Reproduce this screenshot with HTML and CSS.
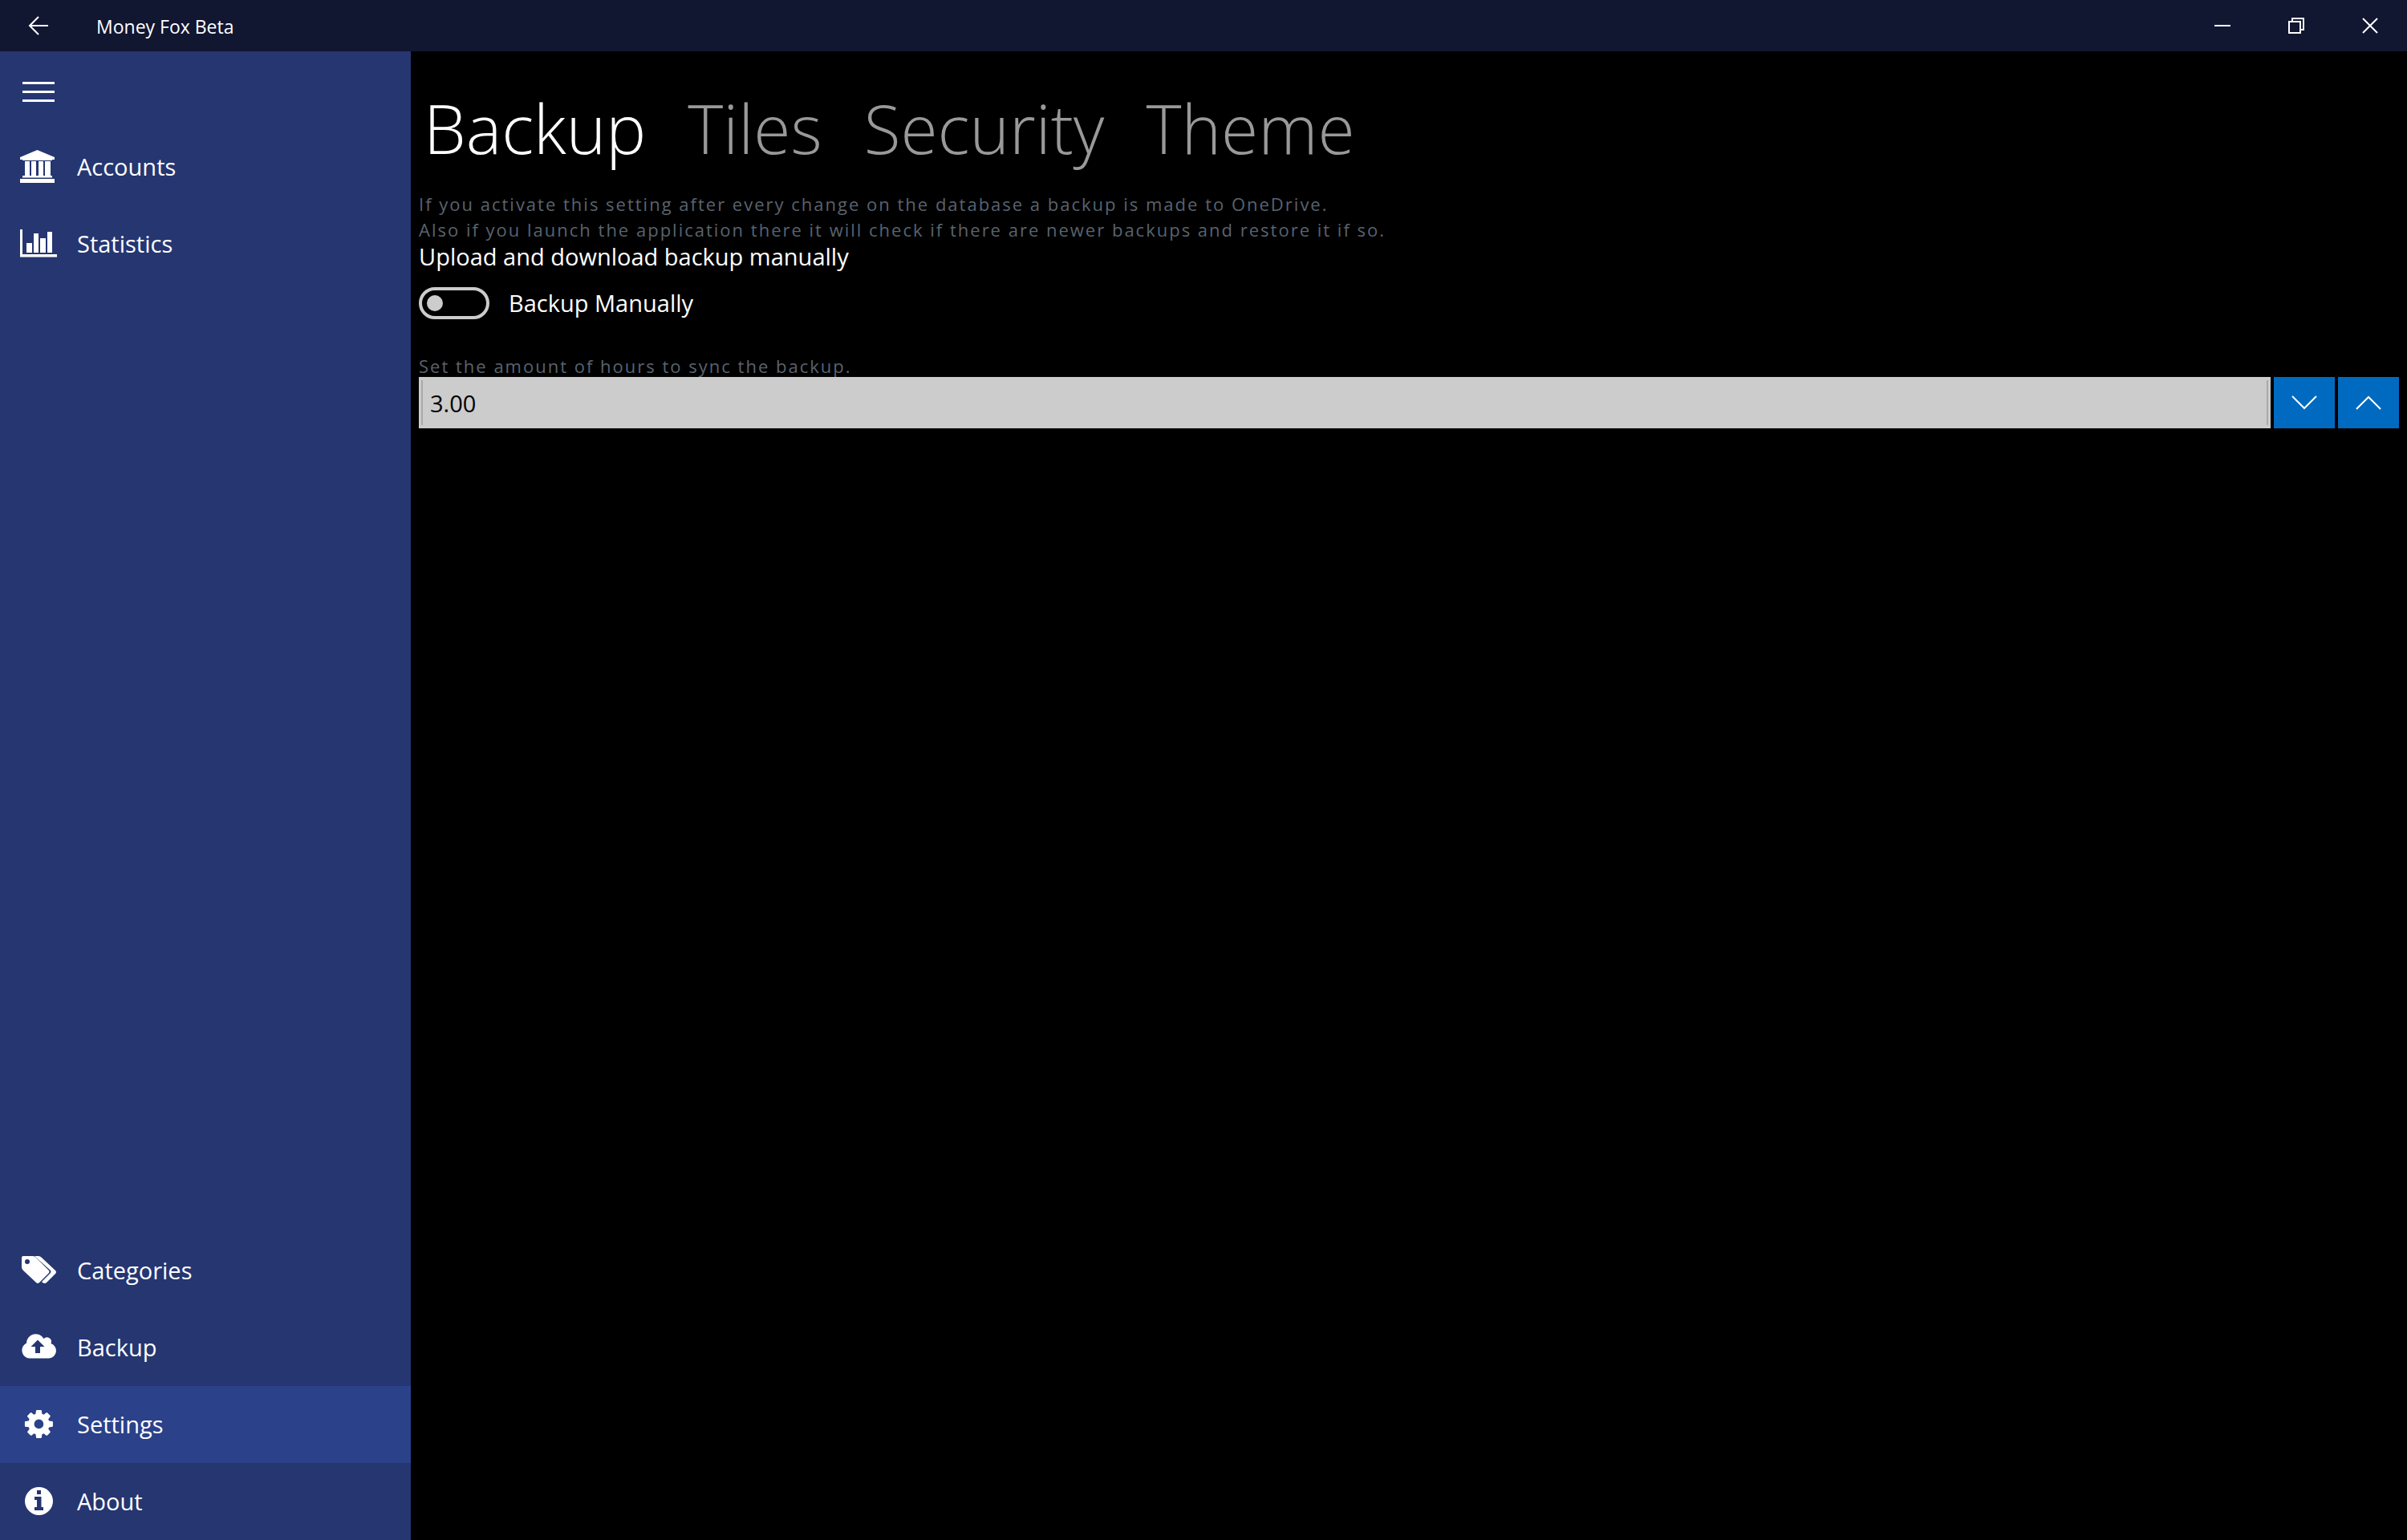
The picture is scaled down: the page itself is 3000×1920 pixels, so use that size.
FILE: index.html
```html
<!DOCTYPE html>
<html lang="en">
<head>
<meta charset="utf-8">
<title>Money Fox Beta</title>
<link rel="stylesheet" href="styles.css">
</head>
<body>
<header class="titlebar">
  <button class="back" aria-label="Back"><svg width="26" height="24" viewBox="0 0 26 24"><path d="M25 12H2M13 1L2 12l11 11" /></svg></button>
  <h1 class="app-name">Money Fox Beta</h1>
  <div class="window-buttons">
    <button aria-label="Minimize"><svg width="20" height="20" viewBox="0 0 20 20"><path d="M0 10h20"/></svg></button>
    <button aria-label="Restore"><svg width="20" height="20" viewBox="0 0 20 20"><path d="M1 5h14v14H1zM5 5V1h14v14h-4"/></svg></button>
    <button aria-label="Close"><svg width="20" height="20" viewBox="0 0 20 20"><path d="M1 1l18 18M19 1L1 19"/></svg></button>
  </div>
</header>
<div class="shell">
  <nav class="sidebar">
    <button class="menu" aria-label="Menu"><svg width="40" height="26" viewBox="0 0 40 26"><path d="M0 0h40v3H0zM0 11h40v3H0zM0 22h40v3H0z"/></svg></button>
    <a class="item" href="#accounts"><svg viewBox="0 0 48 48"><path d="M22.500 3L44 12v3h-3v1H4v-1H1v-3zM7 17h6v18h2V17h6v18h3V17h6v18h2V17h7v18h2v2.500H4V35h3zM1 39h43v5H1z"/></svg>Accounts</a>
    <a class="item" href="#statistics"><svg viewBox="0 0 48 48"><path d="M1 6h3v31h43v3.500H1zM9 23h7v12H9zM18 11h6v24h-6zM26 17h7v18h-7zM35 9h6v26h-6z"/></svg>Statistics</a>
    <div class="spacer"></div>
    <a class="item" href="#categories"><svg viewBox="0 0 48 48"><path fill-rule="evenodd" d="M5 6h12q2 0 4 2l15.500 15.500q2 2 0 4L25 39q-2 2-4 0L5 24q-2-2-2-4V8q0-2 2-2zM10 10a3 3 0 1 0 0 6 3 3 0 0 0 0-6z"/><path d="M19 6h5q2 0 4 2l17 16q2 2 0 4L34 39q-2 2-5 0l-1-1 10.500-10.500q2-2 0-4z"/></svg>Categories</a>
    <a class="item" href="#backup"><svg viewBox="0 0 48 48"><path fill-rule="evenodd" d="M13 37.500a10 10 0 0 1-4-19A11.500 11.500 0 0 1 30.500 13a5.500 5.500 0 0 1 9 6A9.500 9.500 0 0 1 37 37.500zM23 14.500L14.500 23H20v8h6v-8h5.500z"/></svg>Backup</a>
    <a class="item selected" href="#settings" aria-current="page"><svg viewBox="0 0 48 48"><path transform="translate(4 3) scale(.0228)" d="M1152 896q0-106-75-181t-181-75-181 75-75 181 75 181 181 75 181-75 75-181zm512-109v222q0 12-8 23t-20 13l-185 28q-19 54-39 91 35 50 107 138 10 12 10 25t-9 23q-27 37-99 108t-94 71q-12 0-26-9l-138-108q-44 23-91 38-16 136-29 186-7 28-36 28h-222q-14 0-24.500-8.500t-11.500-21.500l-28-184q-49-16-90-37l-141 107q-10 9-25 9-14 0-25-11-126-114-165-168-7-10-7-23 0-12 8-23 15-21 51-66.500t54-70.500q-27-50-41-99l-183-27q-13-2-21-12.500t-8-23.500v-222q0-12 8-23t19-13l186-28q14-46 39-92-40-57-107-138-10-12-10-24 0-10 9-23 26-36 98.500-107.500t94.500-71.500q13 0 26 10l138 107q44-23 91-38 16-136 29-186 7-28 36-28h222q14 0 24.500 8.500t11.500 21.500l28 184q49 16 90 37l142-107q9-9 24-9 13 0 25 10 129 119 165 170 7 8 7 22 0 12-8 23-15 21-51 66.500t-54 70.500q26 50 41 98l183 28q13 2 21 12.500t8 23.500z"/></svg>Settings</a>
    <a class="item" href="#about"><svg viewBox="0 0 48 48"><path fill-rule="evenodd" d="M24.500 6a17.500 17.500 0 1 0 0 35 17.500 17.500 0 0 0 0-35zM22 10h5v5h-5zM19 18h8.500v13H30v4H19v-4h3v-9h-3z"/></svg>About</a>
  </nav>
  <main class="content">
    <div class="pivot" role="tablist">
      <button role="tab" aria-selected="true">Backup</button>
      <button role="tab" aria-selected="false">Tiles</button>
      <button role="tab" aria-selected="false">Security</button>
      <button role="tab" aria-selected="false">Theme</button>
    </div>
    <p class="hint">If you activate this setting after every change on the database a backup is made to OneDrive.<br>Also if you launch the application there it will check if there are newer backups and restore it if so.</p>
    <p class="toggle-header">Upload and download backup manually</p>
    <label class="toggle"><input type="checkbox" role="switch">Backup Manually</label>
    <label class="hint hours-label" for="hours">Set the amount of hours to sync the backup.</label>
    <div class="stepper">
      <span class="field"><input id="hours" type="text" inputmode="decimal" value="3.00"></span>
      <button aria-label="Decrease"><svg width="32" height="18" viewBox="0 0 32 18"><path d="M1 1l15 15L31 1"/></svg></button>
      <button aria-label="Increase"><svg width="32" height="18" viewBox="0 0 32 18"><path d="M1 17L16 2l15 15"/></svg></button>
    </div>
  </main>
</div>
</body>
</html>
```

FILE: styles.css
```css
* { box-sizing: border-box; }

body {
  margin: 0;
  min-height: 100vh;
  display: flex;
  flex-direction: column;
  background: #000;
  color: #fff;
  font: 29px/40px "Open Sans", "Noto Sans", sans-serif;
}

button {
  display: flex;
  align-items: center;
  justify-content: center;
  padding: 0;
  border: 0;
  background: none;
  color: inherit;
  font: inherit;
}

h1, p { margin: 0; }

/* Title bar */
.titlebar {
  display: flex;
  height: 64px;
  background: #111631;
}

.titlebar svg, .stepper svg {
  fill: none;
  stroke: #fff;
  stroke-width: 2;
}

.back { width: 96px; }

.app-name {
  flex: 1;
  padding-left: 24px;
  font-size: 23px;
  font-weight: 400;
  line-height: 66px;
}

.window-buttons { display: flex; }
.window-buttons button { width: 92px; }

/* Sidebar */
.shell {
  flex: 1;
  display: flex;
}

.sidebar {
  flex: none;
  width: 512px;
  display: flex;
  flex-direction: column;
  background: #253671;
}

.sidebar svg { fill: #fff; }

.menu {
  width: 96px;
  height: 96px;
  padding-top: 6px;
}

.item {
  display: flex;
  align-items: center;
  gap: 24px;
  height: 96px;
  padding-left: 24px;
  color: #fff;
  text-decoration: none;
}

.item svg {
  width: 48px;
  height: 48px;
}

.selected { background: #2b4189; }
.spacer { flex: 1; }

/* Settings page */
.content {
  flex: 1;
  display: flex;
  flex-direction: column;
  padding: 38px 10px;
}

.pivot {
  display: flex;
  gap: 52px;
  padding-left: 6px;
  margin-bottom: 20px;
}

.pivot button {
  color: #999;
  font-size: 84px;
  font-weight: 300;
  line-height: 116px;
}

.pivot button[aria-selected="true"] { color: #fff; }

.hint {
  color: #59636f;
  font-size: 22px;
  line-height: 32px;
  letter-spacing: 2px;
}

.toggle-header { line-height: 36px; }

.toggle {
  display: flex;
  align-items: center;
  gap: 24px;
  margin: 20px 0 44px;
}

.toggle input {
  appearance: none;
  display: flex;
  align-items: center;
  width: 88px;
  height: 40px;
  margin: 0;
  padding: 0 6px;
  border: 4px solid #ccc;
  border-radius: 20px;
}

.toggle input::before {
  content: "";
  width: 20px;
  height: 20px;
  border-radius: 50%;
  background: #ccc;
}

.toggle input:checked { justify-content: flex-end; }

.hours-label { line-height: 28px; }

.stepper {
  display: flex;
  gap: 4px;
  height: 64px;
}

.field {
  flex: 1;
  padding: 4px 3px;
  background: #ccc;
}

.field input {
  display: block;
  width: 100%;
  height: 56px;
  padding: 0 9px;
  border: solid #aaa;
  border-width: 0 2px;
  background: none;
  color: #000;
  font: inherit;
}

.stepper button {
  width: 76px;
  background: #006ac1;
}
```
